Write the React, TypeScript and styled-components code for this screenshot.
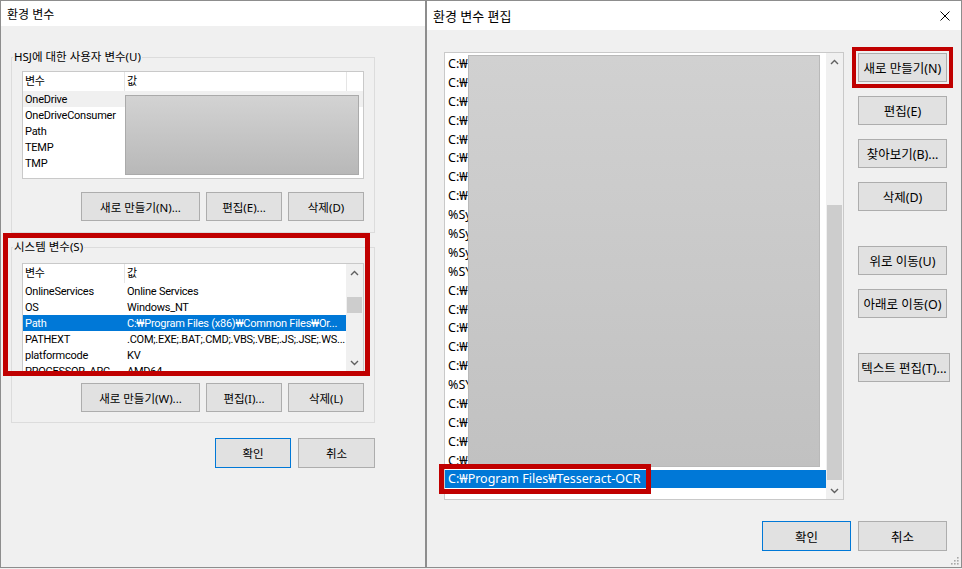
import React from "react";
import styled, { createGlobalStyle } from "styled-components";

const GlobalStyle = createGlobalStyle`
  html, body {
    margin: 0;
    padding: 0;
    background: #f0f0f0;
  }
  body {
    font-family: "Noto Sans", "Noto Sans CJK KR", sans-serif;
    color: #000;
  }
  *, *::before, *::after {
    box-sizing: border-box;
  }
`;

const Screen = styled.div`
  display: flex;
  width: 962px;
  height: 569px;
  overflow: hidden;
`;

const Window = styled.div<{ $width: number }>`
  position: relative;
  display: flex;
  flex-direction: column;
  flex: none;
  width: ${({ $width }) => $width}px;
  height: 568px;
  border: 1px solid #8d8d8d;
  background: #f0f0f0;
`;

const TitleBar = styled.div<{ $height: number; $size: number }>`
  display: flex;
  align-items: center;
  justify-content: space-between;
  flex: none;
  height: ${({ $height }) => $height}px;
  padding: 0 11px 0 6px;
  background: #fff;
  font-size: ${({ $size }) => $size}px;
`;

// ---- left window ----

const LeftBody = styled.div`
  position: relative;
  flex: 1;
  padding: 24px 50px 0 10px;
`;

const Group = styled.fieldset<{ $top: number; $gap: number; $bottom: number }>`
  display: flex;
  flex-direction: column;
  gap: ${({ $gap }) => $gap}px;
  min-width: 0;
  margin: 0;
  padding: ${({ $top, $bottom }) => `${$top}px 10px ${$bottom}px`};
  border: 1px solid #dcdcdc;

  & + & {
    margin-top: 7px;
  }
`;

const Legend = styled.legend`
  margin-left: -9px;
  padding: 0 1px;
  font-size: 11.5px;
  line-height: 14px;
`;

const ListView = styled.div<{ $height: number }>`
  position: relative;
  display: flex;
  flex: none;
  height: ${({ $height }) => $height}px;
  border: 1px solid #c9c9c9;
  background: #fff;
  overflow: hidden;
`;

const Columns = styled.div`
  flex: 1;
  min-width: 0;
  font-family: Roboto, "Noto Sans CJK KR", sans-serif;
  font-size: 11px;
  letter-spacing: -0.25px;
`;

const HeaderRow = styled.div`
  display: flex;
  height: 19px;
  line-height: 19px;
`;

const HeaderCell = styled.div<{ $width: number }>`
  flex: none;
  width: ${({ $width }) => $width}px;
  padding-left: 2px;
  border-right: 1px solid #e5e5e5;
`;

const Row = styled.div<{ $state?: "selected" | "hover" }>`
  display: flex;
  height: 16px;
  line-height: 17px;
  background: ${({ $state }) =>
    $state === "selected" ? "#0078d7" : $state === "hover" ? "#f0f0f0" : "transparent"};
  color: ${({ $state }) => ($state === "selected" ? "#fff" : "#000")};
`;

const Cell = styled.div<{ $width?: number }>`
  flex: ${({ $width }) => ($width ? "none" : "1")};
  width: ${({ $width }) => ($width ? `${$width}px` : "auto")};
  min-width: 0;
  padding-left: 2px;
  white-space: nowrap;
  overflow: hidden;
`;

const ScrollBar = styled.div`
  display: flex;
  flex-direction: column;
  flex: none;
  width: 17px;
  background: #f0f0f0;
`;

const ScrollArrow = styled.div`
  display: flex;
  align-items: center;
  justify-content: center;
  flex: none;
  height: 17px;
`;

const ScrollTrack = styled.div`
  flex: 1;
  display: flex;
  flex-direction: column;
`;

const ScrollThumb = styled.div<{ $offset: number; $length: number }>`
  flex: none;
  height: ${({ $length }) => $length}px;
  margin: ${({ $offset }) => $offset}px 1px 0;
  background: #cdcdcd;
`;

const Redaction = styled.div`
  position: absolute;
  z-index: 1;
  border: 1px solid #aaaaaa;
  background: linear-gradient(to bottom, #d3d3d3, #b8b8b8);
`;

const UserValueMask = styled(Redaction)`
  left: 102px;
  top: 23px;
  width: 234px;
  height: 80px;
`;

const PathMask = styled(Redaction)`
  left: 23px;
  top: 2px;
  width: 352px;
  height: 412px;
  border-color: #b9b9b9;
  background: linear-gradient(to bottom, #d1d1d1, #c1c1c1);
`;

const ButtonRow = styled.div`
  display: flex;
  justify-content: flex-end;
  gap: 6px;
`;

const Button = styled.button<{
  $width: number;
  $height?: number;
  $size?: number;
  $default?: boolean;
  $marked?: boolean;
  $push?: boolean;
}>`
  flex: none;
  width: ${({ $width }) => $width}px;
  height: ${({ $height }) => $height ?? 29}px;
  margin-top: ${({ $push }) => ($push ? 21 : 0)}px;
  padding: 0;
  border: 1px solid ${({ $default }) => ($default ? "#0078d7" : "#adadad")};
  background: #e1e1e1;
  font-family: inherit;
  font-size: ${({ $size }) => $size ?? 11.5}px;
  color: #000;
  white-space: nowrap;
  outline: ${({ $marked }) => ($marked ? "4px solid #c00000" : "none")};
  outline-offset: 2px;
`;

const Footer = styled.div<{ $top: number; $gap: number }>`
  display: flex;
  justify-content: flex-end;
  gap: ${({ $gap }) => $gap}px;
  margin-top: ${({ $top }) => $top}px;
`;

const Annotation = styled.div`
  position: absolute;
  top: 207px;
  left: 2px;
  width: 367px;
  height: 143px;
  border: 5px solid #c00000;
  pointer-events: none;
`;

// ---- right window ----

const RightBody = styled.div`
  flex: 1;
  display: flex;
  flex-direction: column;
  padding: 22px 14px 0 17px;
`;

const MainRow = styled.div`
  display: flex;
  gap: 14px;
`;

const PathList = styled.div`
  position: relative;
  display: flex;
  flex: none;
  width: 400px;
  height: 448px;
  border: 1px solid #c9c9c9;
  background: #fff;
`;

const PathRows = styled.div`
  flex: 1;
  min-width: 0;
  padding-top: 1px;
  font-size: 12.5px;
`;

const PathRow = styled.div<{ $selected?: boolean }>`
  display: flex;
  align-items: center;
  height: 18.9px;
  padding-left: 3px;
  white-space: nowrap;
  background: ${({ $selected }) => ($selected ? "#0078d7" : "transparent")};
  color: ${({ $selected }) => ($selected ? "#fff" : "#000")};
`;

const MarkedText = styled.span`
  position: relative;
  z-index: 2;
  display: inline-block;
  margin-left: -4px;
  padding: 1px 5px 1px 4px;
  line-height: 18px;
  outline: 5px solid #c00000;
`;

const SideColumn = styled.div`
  display: flex;
  flex-direction: column;
  align-items: flex-start;
  gap: 14px;
  flex: none;
  width: 89px;
  padding-top: 1px;
`;

const Grip = styled.svg`
  position: absolute;
  right: 1px;
  bottom: 1px;
`;

const Chevron = ({ up }: { up?: boolean }) => (
  <svg width="9" height="6" viewBox="0 0 9 6">
    <path
      d={up ? "M1 5L4.5 1.5L8 5" : "M1 1L4.5 4.5L8 1"}
      fill="none"
      stroke="#606060"
      strokeWidth="1.4"
    />
  </svg>
);

const CloseIcon = () => (
  <svg width="10" height="10" viewBox="0 0 10 10">
    <path d="M0.5 0.5L9.5 9.5M9.5 0.5L0.5 9.5" stroke="#000" strokeWidth="1" />
  </svg>
);

interface Variable {
  name: string;
  value: string;
  state?: "selected" | "hover";
}

const userVars: Variable[] = [
  { name: "OneDrive", value: "", state: "hover" },
  { name: "OneDriveConsumer", value: "" },
  { name: "Path", value: "" },
  { name: "TEMP", value: "" },
  { name: "TMP", value: "" },
];

const systemVars: Variable[] = [
  { name: "OnlineServices", value: "Online Services" },
  { name: "OS", value: "Windows_NT" },
  { name: "Path", value: "C:₩Program Files (x86)₩Common Files₩Or...", state: "selected" },
  { name: "PATHEXT", value: ".COM;.EXE;.BAT;.CMD;.VBS;.VBE;.JS;.JSE;.WS..." },
  { name: "platformcode", value: "KV" },
  { name: "PROCESSOR_ARC", value: "AMD64" },
];

const pathEntries = [
  "C:₩", "C:₩", "C:₩", "C:₩", "C:₩", "C:₩", "C:₩", "C:₩",
  "%Sy", "%Sy", "%Sy", "%SY",
  "C:₩", "C:₩", "C:₩", "C:₩", "C:₩",
  "%SY",
  "C:₩", "C:₩", "C:₩", "C:₩",
];

interface ListProps {
  rows: Variable[];
  height: number;
  scroll?: boolean;
  children?: React.ReactNode;
}

const VariableList = ({ rows, height, scroll, children }: ListProps) => (
  <ListView $height={height}>
    <Columns>
      <HeaderRow>
        <HeaderCell $width={102}>변수</HeaderCell>
        <HeaderCell $width={222}>값</HeaderCell>
      </HeaderRow>
      {rows.map((row) => (
        <Row key={row.name} $state={row.state}>
          <Cell $width={102}>{row.name}</Cell>
          <Cell>{row.value}</Cell>
        </Row>
      ))}
    </Columns>
    {scroll && (
      <ScrollBar>
        <ScrollArrow>
          <Chevron up />
        </ScrollArrow>
        <ScrollTrack>
          <ScrollThumb $offset={16} $length={16} />
        </ScrollTrack>
        <ScrollArrow>
          <Chevron />
        </ScrollArrow>
      </ScrollBar>
    )}
    {children}
  </ListView>
);

export default function App() {
  return (
    <>
      <GlobalStyle />
      <Screen>
        <Window $width={426}>
          <TitleBar $height={25} $size={12}>
            환경 변수
          </TitleBar>
          <LeftBody>
            <Group $top={7} $gap={13} $bottom={11}>
              <Legend>HSJ에 대한 사용자 변수(U)</Legend>
              <VariableList rows={userVars} height={108}>
                <UserValueMask />
              </VariableList>
              <ButtonRow>
                <Button $width={119}>새로 만들기(N)...</Button>
                <Button $width={76}>편집(E)...</Button>
                <Button $width={76}>삭제(D)</Button>
              </ButtonRow>
            </Group>
            <Group $top={9} $gap={11} $bottom={10}>
              <Legend>시스템 변수(S)</Legend>
              <VariableList rows={systemVars} height={109} scroll />
              <ButtonRow>
                <Button $width={119}>새로 만들기(W)...</Button>
                <Button $width={76}>편집(I)...</Button>
                <Button $width={76}>삭제(L)</Button>
              </ButtonRow>
            </Group>
            <Footer $top={15} $gap={7}>
              <Button $width={76} $height={30} $default>
                확인
              </Button>
              <Button $width={77} $height={30}>
                취소
              </Button>
            </Footer>
            <Annotation />
          </LeftBody>
        </Window>

        <Window $width={536}>
          <TitleBar $height={29} $size={13}>
            <span>환경 변수 편집</span>
            <CloseIcon />
          </TitleBar>
          <RightBody>
            <MainRow>
              <PathList>
                <PathRows>
                  {pathEntries.map((entry, i) => (
                    <PathRow key={i}>{entry}</PathRow>
                  ))}
                  <PathRow $selected>
                    <MarkedText>C:₩Program Files₩Tesseract-OCR</MarkedText>
                  </PathRow>
                </PathRows>
                <ScrollBar>
                  <ScrollArrow>
                    <Chevron up />
                  </ScrollArrow>
                  <ScrollTrack>
                    <ScrollThumb $offset={135} $length={275} />
                  </ScrollTrack>
                  <ScrollArrow>
                    <Chevron />
                  </ScrollArrow>
                </ScrollBar>
                <PathMask />
              </PathList>
              <SideColumn>
                <Button $width={89} $size={12.5} $marked>
                  새로 만들기(N)
                </Button>
                <Button $width={89} $size={12.5}>
                  편집(E)
                </Button>
                <Button $width={89} $size={12.5}>
                  찾아보기(B)...
                </Button>
                <Button $width={89} $size={12.5}>
                  삭제(D)
                </Button>
                <Button $width={89} $size={12.5} $push>
                  위로 이동(U)
                </Button>
                <Button $width={89} $size={12.5}>
                  아래로 이동(O)
                </Button>
                <Button $width={92} $size={12.5} $push>
                  텍스트 편집(T)...
                </Button>
              </SideColumn>
            </MainRow>
            <Footer $top={21} $gap={7}>
              <Button $width={89} $height={30} $size={12.5} $default>
                확인
              </Button>
              <Button $width={89} $height={30} $size={12.5}>
                취소
              </Button>
            </Footer>
          </RightBody>
          <Grip width="10" height="10" viewBox="0 0 10 10">
            {[
              [8, 2],
              [8, 5],
              [5, 5],
              [8, 8],
              [5, 8],
              [2, 8],
            ].map(([cx, cy]) => (
              <rect key={`${cx}-${cy}`} x={cx - 1} y={cy - 1} width="1.6" height="1.6" fill="#a8a8a8" />
            ))}
          </Grip>
        </Window>
      </Screen>
    </>
  );
}
